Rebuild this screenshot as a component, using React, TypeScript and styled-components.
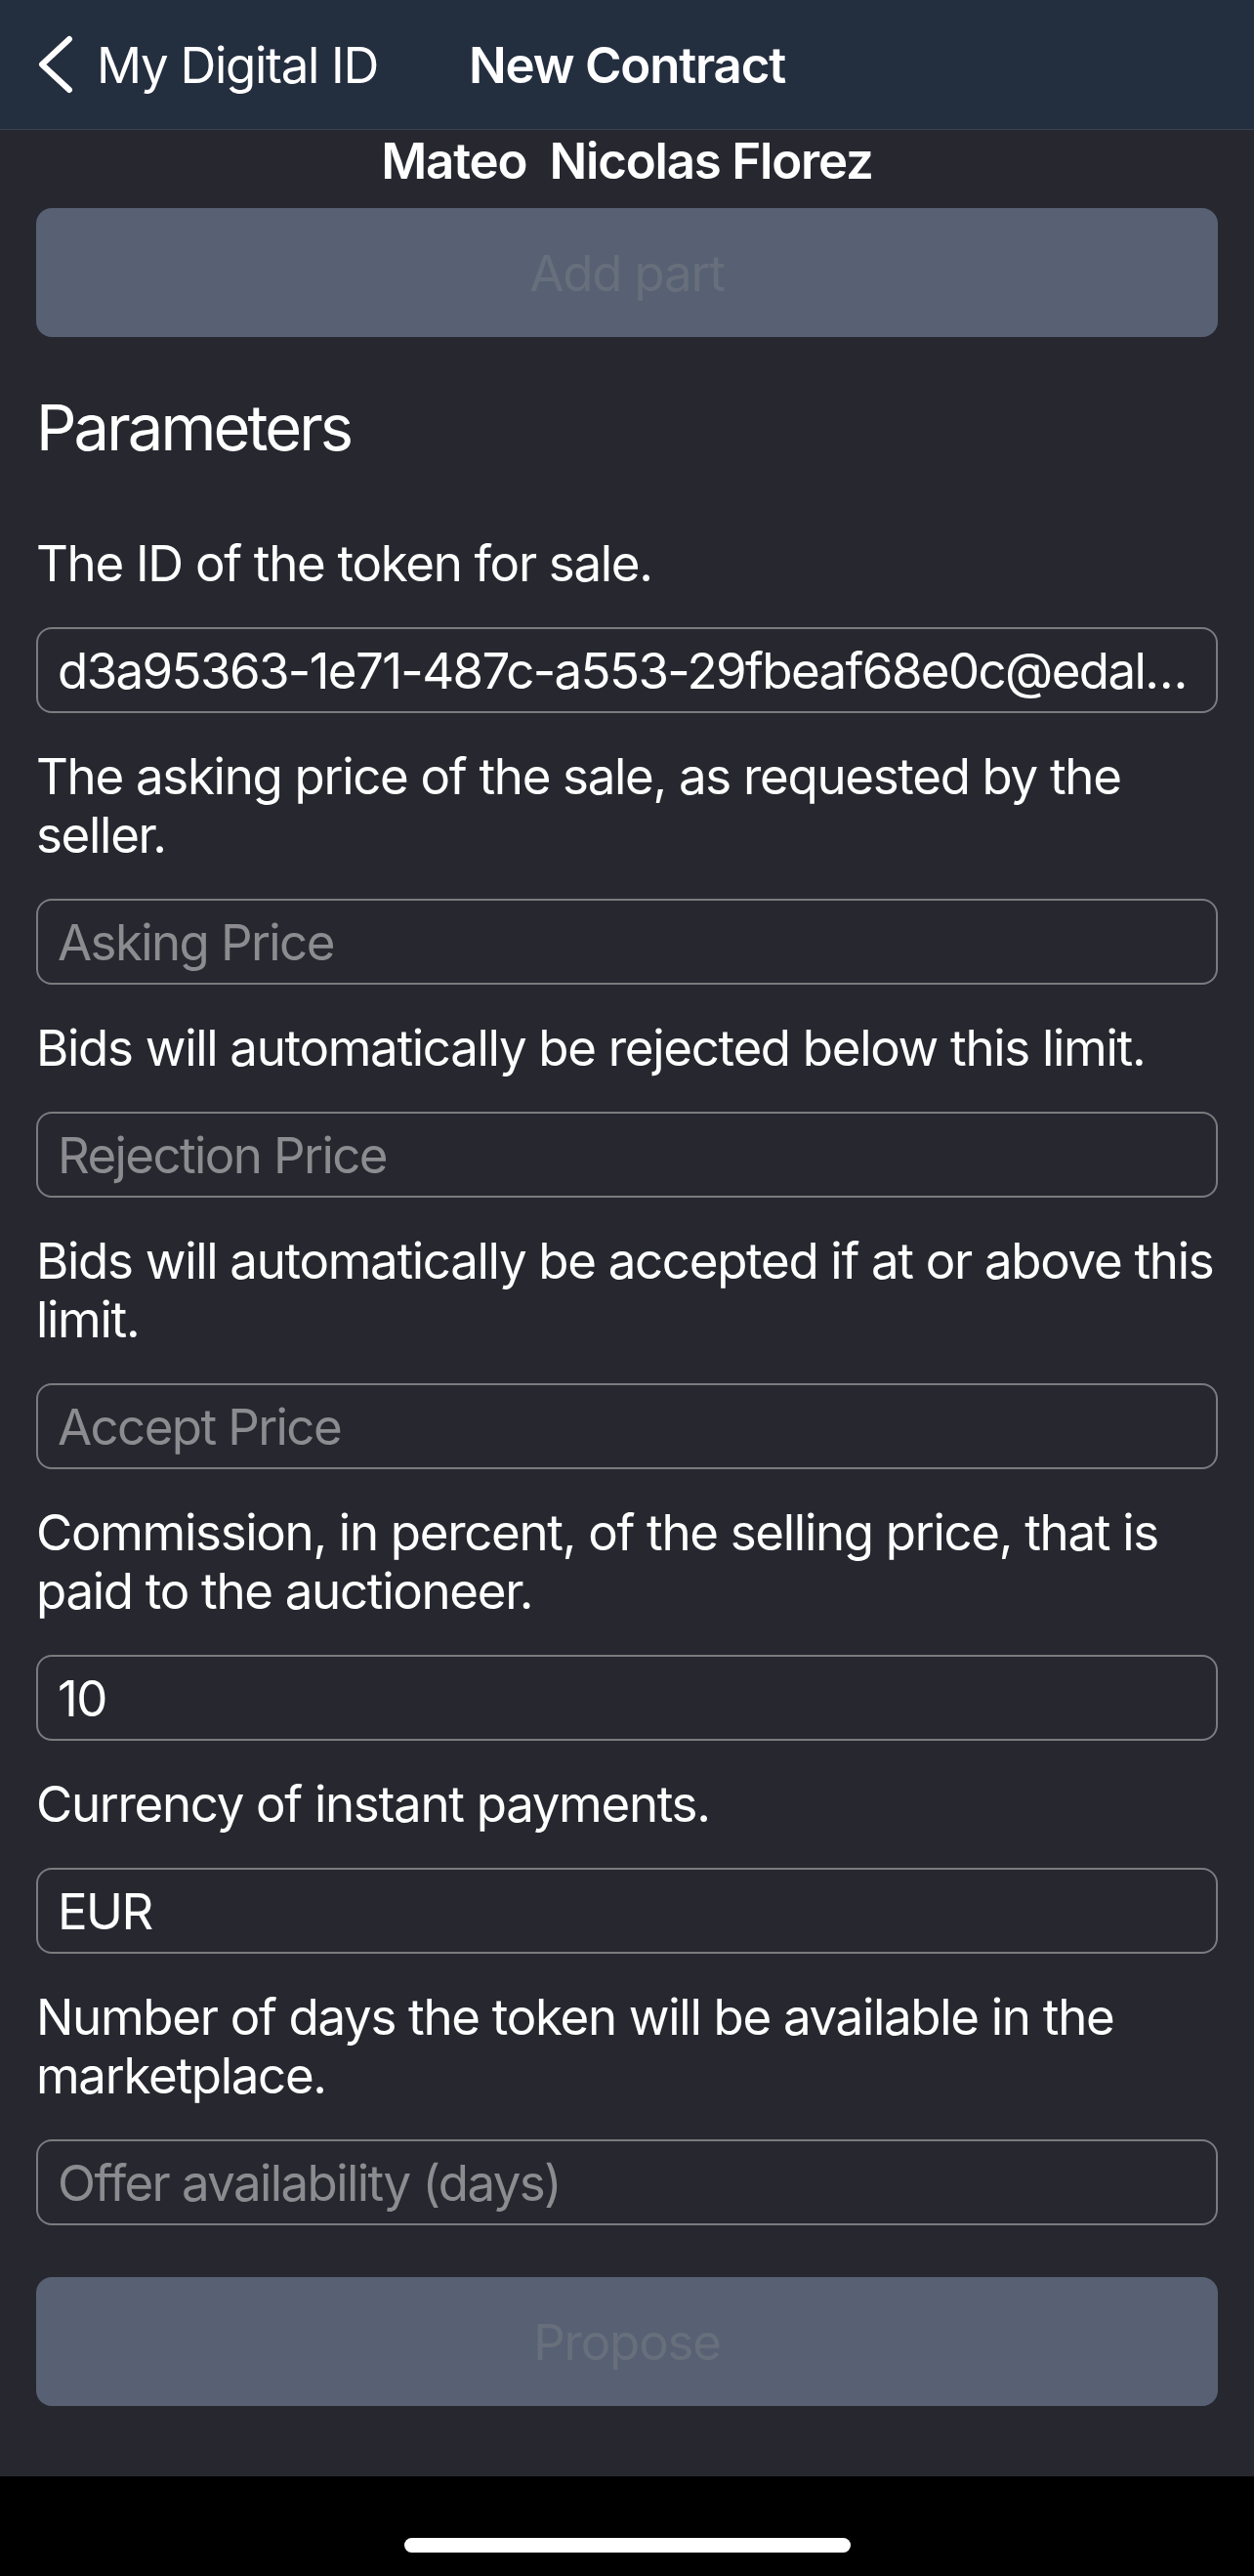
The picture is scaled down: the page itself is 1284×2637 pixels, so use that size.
import React from "react";
import styled, { createGlobalStyle } from "styled-components";

const GlobalStyle = createGlobalStyle`
  html, body {
    margin: 0;
    padding: 0;
    background: #000000;
  }
  * {
    box-sizing: border-box;
  }
  body {
    font-family: Inter, "Noto Sans", "Liberation Sans", sans-serif;
    -webkit-font-smoothing: antialiased;
  }
`;

const Screen = styled.div`
  width: 1284px;
  min-height: 2637px;
  display: flex;
  flex-direction: column;
  background: #27282f;
  color: #ffffff;
`;

const NavBar = styled.header`
  height: 133px;
  flex: none;
  display: grid;
  grid-template-columns: 1fr auto 1fr;
  align-items: center;
  padding: 0 37px;
  background: #232e3f;
  border-bottom: 1px solid #3d4149;
`;

const BackButton = styled.button`
  justify-self: start;
  display: flex;
  align-items: center;
  gap: 22px;
  background: none;
  border: none;
  padding: 0;
  margin: 0;
  color: #ffffff;
  font-family: inherit;
  font-size: 51px;
  font-weight: 400;
  letter-spacing: -1.3px;
  cursor: pointer;
`;

const NavTitle = styled.h1`
  margin: 0;
  font-size: 51px;
  font-weight: 600;
  letter-spacing: -1.2px;
  color: #ffffff;
`;

const Content = styled.main`
  flex: 1;
  display: flex;
  flex-direction: column;
  padding: 2px 37px 72px;
`;

const OwnerName = styled.div`
  text-align: center;
  font-size: 51px;
  line-height: 60px;
  font-weight: 600;
  letter-spacing: -1.2px;
`;

const ActionButton = styled.button<{ $top: number }>`
  margin-top: ${(p) => p.$top}px;
  height: 132px;
  width: 100%;
  border: none;
  border-radius: 16px;
  background: #576173;
  color: #686f7c;
  font-family: inherit;
  font-size: 51px;
  font-weight: 400;
  letter-spacing: -1.2px;
`;

const SectionTitle = styled.h2`
  margin: 54px 0 70px;
  font-size: 65px;
  line-height: 78px;
  font-weight: 400;
  letter-spacing: -2.9px;
`;

const FieldList = styled.div`
  display: flex;
  flex-direction: column;
  gap: 35px;
`;

const FieldLabel = styled.label`
  display: block;
  font-size: 51px;
  line-height: 60px;
  font-weight: 400;
  letter-spacing: -1.3px;
  color: #ffffff;
`;

const TextField = styled.input`
  display: block;
  width: 100%;
  height: 88px;
  padding: 0 18px 0 20px;
  border: 2px solid #7b7b7f;
  border-radius: 16px;
  background: transparent;
  color: #ffffff;
  font-family: inherit;
  font-size: 51px;
  font-weight: 400;
  letter-spacing: -1.6px;
  text-overflow: ellipsis;
  outline: none;

  &::placeholder {
    color: #8c8c90;
    opacity: 1;
  }
`;

const HomeArea = styled.footer`
  height: 102px;
  flex: none;
  display: flex;
  justify-content: center;
  padding-top: 63px;
  background: #000000;
`;

const HomeIndicator = styled.div`
  width: 457px;
  height: 15px;
  border-radius: 8px;
  background: #ffffff;
`;

const Chevron = () => (
  <svg width="40" height="60" viewBox="0 0 40 60" fill="none">
    <polyline
      points="34,4 6,30 34,56"
      stroke="#ffffff"
      strokeWidth="6"
      strokeLinecap="round"
      strokeLinejoin="round"
    />
  </svg>
);

type Field = {
  label: string;
  placeholder?: string;
  value?: string;
};

const fields: Field[] = [
  {
    label: "The ID of the token for sale.",
    value: "d3a95363-1e71-487c-a553-29fbeaf68e0c@edaler.lab.tagroot.io",
  },
  {
    label: "The asking price of the sale, as requested by the seller.",
    placeholder: "Asking Price",
  },
  {
    label: "Bids will automatically be rejected below this limit.",
    placeholder: "Rejection Price",
  },
  {
    label: "Bids will automatically be accepted if at or above this limit.",
    placeholder: "Accept Price",
  },
  {
    label: "Commission, in percent, of the selling price, that is paid to the auctioneer.",
    value: "10",
  },
  {
    label: "Currency of instant payments.",
    value: "EUR",
  },
  {
    label: "Number of days the token will be available in the marketplace.",
    placeholder: "Offer availability (days)",
  },
];

export default function App() {
  return (
    <>
      <GlobalStyle />
      <Screen>
        <NavBar>
          <BackButton>
            <Chevron />
            My Digital ID
          </BackButton>
          <NavTitle>New Contract</NavTitle>
          <span />
        </NavBar>
        <Content>
          <OwnerName>Mateo&nbsp; Nicolas Florez</OwnerName>
          <ActionButton $top={18} disabled>
            Add part
          </ActionButton>
          <SectionTitle>Parameters</SectionTitle>
          <FieldList>
            {fields.map((f, i) => (
              <React.Fragment key={i}>
                <FieldLabel htmlFor={`field-${i}`}>{f.label}</FieldLabel>
                <TextField
                  id={`field-${i}`}
                  readOnly
                  defaultValue={f.value}
                  placeholder={f.placeholder}
                />
              </React.Fragment>
            ))}
          </FieldList>
          <ActionButton $top={53} disabled>
            Propose
          </ActionButton>
        </Content>
        <HomeArea>
          <HomeIndicator />
        </HomeArea>
      </Screen>
    </>
  );
}
